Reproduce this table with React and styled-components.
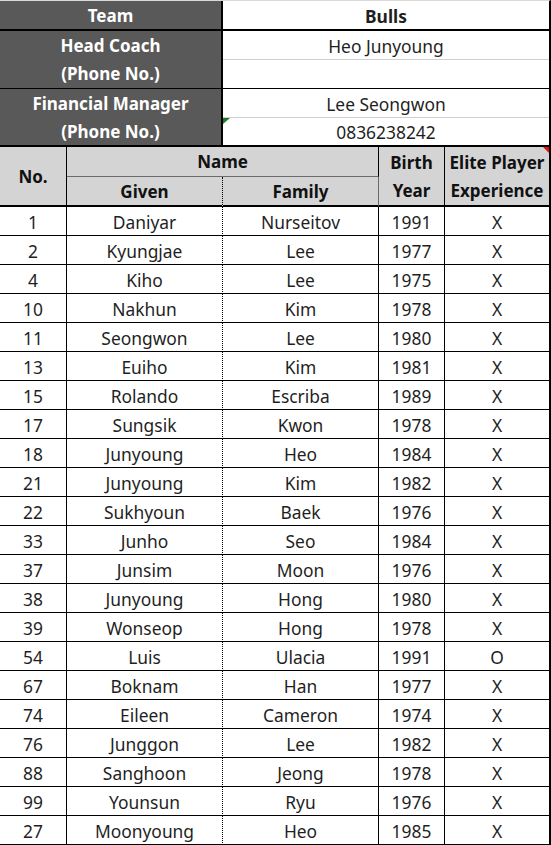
import React from "react";
import styled, { createGlobalStyle } from "styled-components";

const GlobalStyle = createGlobalStyle`
  html, body {
    margin: 0;
    padding: 0;
    background: #ffffff;
  }
  body {
    font-family: "Noto Sans", "Noto Sans CJK KR", sans-serif;
  }
`;

const players = [
  ["1", "Daniyar", "Nurseitov", "1991", "X"],
  ["2", "Kyungjae", "Lee", "1977", "X"],
  ["4", "Kiho", "Lee", "1975", "X"],
  ["10", "Nakhun", "Kim", "1978", "X"],
  ["11", "Seongwon", "Lee", "1980", "X"],
  ["13", "Euiho", "Kim", "1981", "X"],
  ["15", "Rolando", "Escriba", "1989", "X"],
  ["17", "Sungsik", "Kwon", "1978", "X"],
  ["18", "Junyoung", "Heo", "1984", "X"],
  ["21", "Junyoung", "Kim", "1982", "X"],
  ["22", "Sukhyoun", "Baek", "1976", "X"],
  ["33", "Junho", "Seo", "1984", "X"],
  ["37", "Junsim", "Moon", "1976", "X"],
  ["38", "Junyoung", "Hong", "1980", "X"],
  ["39", "Wonseop", "Hong", "1978", "X"],
  ["54", "Luis", "Ulacia", "1991", "O"],
  ["67", "Boknam", "Han", "1977", "X"],
  ["74", "Eileen", "Cameron", "1974", "X"],
  ["76", "Junggon", "Lee", "1982", "X"],
  ["88", "Sanghoon", "Jeong", "1978", "X"],
  ["99", "Younsun", "Ryu", "1976", "X"],
  ["27", "Moonyoung", "Heo", "1985", "X"],
];

const Sheet = styled.div`
  display: grid;
  width: 551px;
  box-sizing: border-box;
  grid-template-columns: 67px 156px 156px 66px 104px;
  grid-template-rows: 30px 29px 29px 29px 29px 30px 30px repeat(22, 29px);
  border-top: 1px solid #d9d9d9;
  border-right: 2px solid #000;
  color: #1f1f1f;
  font-size: 17.4px;
`;

const Cell = styled.div`
  position: relative;
  box-sizing: border-box;
  display: flex;
  flex-direction: column;
  align-items: center;
  justify-content: center;
  line-height: 28px;
  padding-top: 1px;
  white-space: nowrap;
  overflow: hidden;
  grid-column: ${(p) => p.$col || "auto"};
  grid-row: ${(p) => p.$row || "auto"};
  border-bottom: ${(p) => p.$bottom || "1px solid #000"};
  border-right: ${(p) => p.$right || "1px solid #000"};
`;

const Label = styled(Cell)`
  background: #595959;
  color: #ffffff;
  font-weight: 700;
  font-size: 17px;
  border-right: 2px solid #000;
`;

const Value = styled(Cell)`
  background: #ffffff;
  border-right: none;
`;

const Head = styled(Cell)`
  background: #d4d4d4;
  font-weight: 700;
  font-size: 17px;
  color: #111;
`;

const Data = styled(Cell)`
  background: #fff;
`;

const GreenFlag = styled.span`
  position: absolute;
  left: 0;
  top: 0;
  width: 0;
  height: 0;
  border-top: 6px solid #1f7a2e;
  border-right: 7px solid transparent;
`;

const RedFlag = styled.span`
  position: absolute;
  right: 0;
  top: 0;
  width: 0;
  height: 0;
  border-top: 6px solid #e01010;
  border-left: 6px solid transparent;
`;

const thick = "2px solid #000";
const light = "1px solid #d0d0d0";
const dotted = "1px dotted #000";

export default function App() {
  return (
    <>
      <GlobalStyle />
      <Sheet>
        <Label $col="1 / 3" $row="1" $bottom={thick}>Team</Label>
        <Value $col="3 / 6" $row="1" $bottom={thick} style={{ fontWeight: 700 }}>
          Bulls
        </Value>

        <Label $col="1 / 3" $row="2 / 4">
          <span>Head Coach</span>
          <span>(Phone No.)</span>
        </Label>
        <Value $col="3 / 6" $row="2" $bottom={light}>Heo Junyoung</Value>
        <Value $col="3 / 6" $row="3" />

        <Label $col="1 / 3" $row="4 / 6" $bottom={thick}>
          <span>Financial Manager</span>
          <span>(Phone No.)</span>
        </Label>
        <Value $col="3 / 6" $row="4" $bottom={light}>Lee Seongwon</Value>
        <Value $col="3 / 6" $row="5" $bottom={thick}>
          <GreenFlag />
          0836238242
        </Value>

        <Head $col="1" $row="6 / 8" $bottom={thick}>No.</Head>
        <Head $col="2 / 4" $row="6" $bottom="1px solid #6a6a6a">Name</Head>
        <Head $col="2" $row="7" $bottom={thick} $right={dotted}>Given</Head>
        <Head $col="3" $row="7" $bottom={thick} $right="1px solid #6a6a6a">Family</Head>
        <Head $col="4" $row="6 / 8" $bottom={thick}>
          <span>Birth</span>
          <span>Year</span>
        </Head>
        <Head $col="5" $row="6 / 8" $bottom={thick} $right="none">
          <RedFlag />
          <span>Elite Player</span>
          <span>Experience</span>
        </Head>

        {players.map((p) => (
          <React.Fragment key={p[0]}>
            <Data>{p[0]}</Data>
            <Data $right={dotted}>{p[1]}</Data>
            <Data>{p[2]}</Data>
            <Data>{p[3]}</Data>
            <Data $right="none">{p[4]}</Data>
          </React.Fragment>
        ))}
      </Sheet>
    </>
  );
}
